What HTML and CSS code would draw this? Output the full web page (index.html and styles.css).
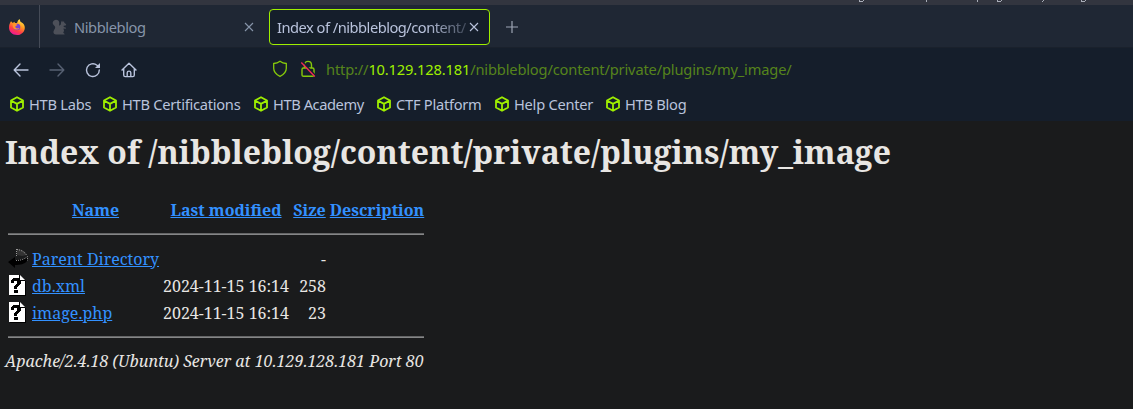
FILE: index.html
```html
<!DOCTYPE html>
<html lang="en">
<head>
<meta charset="utf-8">
<title>Index of /nibbleblog/content/private/plugins/my_image</title>
<link rel="stylesheet" href="styles.css">
</head>
<body>
<svg class="defs" width="0" height="0">
  <symbol id="cube" viewBox="0 0 16 16"><path d="M8 1.2 14 4.5v7L8 14.8 2 11.5v-7zM2.3 4.7 8 7.9l5.7-3.2M8 7.9v6.7" fill="none" stroke="#9fef00" stroke-width="1.8" stroke-linejoin="round"/></symbol>
  <symbol id="close" viewBox="0 0 10 10"><path d="m1 1 8 8M9 1 1 9" fill="none" stroke="currentColor" stroke-width="1.1"/></symbol>
  <symbol id="unknown" viewBox="0 0 18 22"><path d="M2 20h15V6h1v15H2z" fill="#000"/><path d="M1 0h11l5 5v15H1z" fill="#fff"/><path d="M12 0v5h5v1h-6V0z" fill="#000"/><path d="M3 8V5h1V4h1V3h6v1h1v1h1v4h-1v1h-1v1h-1v1H9v2H6v-3h1v-1h1V9h1V6H6v2zM6 15h4v3H6z" fill="#000"/></symbol>
</svg>
<div class="strip"><svg width="240" height="3" viewBox="0 0 240 3"><path d="M0 0h1v1h3V0h1v1H4v1H0zM67 0h1v2h-1zM118 0h1v2h-1zM138 0h1v1h3V0h1v1h-1v1h-4zM184 0h1v1h-1v1h-1V1h1zM222 0h1v1h3V0h1v1h-1v1h-4z" fill="#a9adb8"/></svg></div>
<header>
  <div class="tabs">
    <div class="pinned">
      <svg width="18" height="18" viewBox="0 0 18 18">
        <defs><linearGradient id="fire" x1=".8" y1="0" x2=".3" y2="1"><stop offset="0" stop-color="#fff44f"/><stop offset=".4" stop-color="#ff9a20"/><stop offset=".7" stop-color="#ff3e45"/><stop offset="1" stop-color="#ed169e"/></linearGradient></defs>
        <path d="M3 3.2 4.8 5 6.3 3.8 7 5.1 9 5l1-2.500L11.500 1l1 2.700c3.700 1.700 4.700 4.400 4.200 7.200-.7 3.500-3.800 6.100-7.600 6.100C4.200 17 1 13.800 1 9.500 1 7 1.700 5.300 3 3.200z" fill="url(#fire)"/>
        <circle cx="9" cy="9" r="3.300" fill="#7543d5"/><path d="M4.500 6.400c2-1 3.800-.7 5 .5L7.400 8.200c-.2 1.500.8 2.200 2 2.200l2-.4c-.8 2.200-5.700 2.300-6.400-1z" fill="#ff9430"/>
      </svg>
    </div>
    <div class="tab idle">
      <svg width="16" height="16" viewBox="0 0 16 16"><path d="M4 15.500C1.500 15.500.8 13 2 11.200 3.200 9.400 3.600 8.500 2.600 7 1.400 5.500.4 5 .8 3.200 1.300.8 4.300-.1 6 1.300c2 1.600 1 3.600 1.100 5.500L8.800 5.500 9 3.500l1-2 .9 1.700L12 2l.3 1.700 1.900 1.500-.5 1.300-2 .3v1.100l2.400.9-.4 1-2.300-.3.700 2.300-.9 2 1.300.9v.8z" fill="#4d5059"/></svg>
      <span class="name nib">Nibbleblog</span>
      <svg class="x" width="10" height="10"><use href="#close"/></svg>
    </div>
    <div class="tab active"><span class="name idx">Index of /nibbleblog/content/</span><svg class="x" width="10" height="10"><use href="#close"/></svg></div>
    <svg class="plus" width="14" height="14" viewBox="0 0 14 14"><path d="M7 1v12M1 7h12" stroke="#9da6b5" stroke-width="1.2"/></svg>
  </div>
  <nav class="toolbar">
    <svg width="16" height="16" viewBox="0 0 16 16"><path d="M15 8H1.500M7 2 1.200 8 7 14" class="line"/></svg>
    <svg class="dim" width="16" height="16" viewBox="0 0 16 16"><path d="M1 8h13.500M9 2l5.800 6L9 14" class="line"/></svg>
    <svg width="16" height="16" viewBox="0 0 16 16"><path d="M14.300 8A6.400 6.400 0 1 1 12 3.200l1.500 1.400" class="line"/><path d="M15 1v5h-5z" fill="#b9c3dc"/></svg>
    <svg width="16" height="16" viewBox="0 0 16 16"><path d="M1 8 8 1.200 15 8M2.700 6.700V13c0 1 .5 1.600 1.500 1.600h7.600c1 0 1.500-.6 1.500-1.600V6.700M6.200 14.500v-3.700c0-2.300 3.600-2.300 3.600 0v3.700" class="line"/></svg>
    <div class="url">
      <svg width="16" height="18" viewBox="0 0 16 18"><path d="M8 1.200c2 1.500 4 2.100 6.300 2.300v4.700c0 3.800-2.300 6.200-6.300 8.200-4-2-6.300-4.400-6.300-8.200V3.500C4 3.300 6 2.700 8 1.200z" fill="none" stroke="#86c90a" stroke-width="1.300"/></svg>
      <svg width="16" height="18" viewBox="0 0 16 18"><path d="M4.500 8V5c0-4.800 7-4.800 7 0v3M3.500 8h9q1.500 0 1.500 1.500V15q0 1.300-1.500 1.300h-9Q2 16.300 2 15V9.500Q2 8 3.500 8z" fill="none" stroke="#86c90a" stroke-width="1.400"/><path d="m2.500 1.500 13 14" stroke="#151e2b" stroke-width="1.500"/><path d="m1.300 2.500 13.500 14" stroke="#f02858" stroke-width="1.400"/></svg>
      <span class="address">http://<b>10.129.128.181</b>/nibbleblog/content/private/plugins/my_image/</span>
    </div>
  </nav>
  <nav class="bookmarks">
    <a class="bm1"><svg><use href="#cube"/></svg>HTB Labs</a>
    <a class="bm2"><svg><use href="#cube"/></svg>HTB Certifications</a>
    <a class="bm3"><svg><use href="#cube"/></svg>HTB Academy</a>
    <a class="bm4"><svg><use href="#cube"/></svg>CTF Platform</a>
    <a class="bm5"><svg><use href="#cube"/></svg>Help Center</a>
    <a class="bm6"><svg><use href="#cube"/></svg>HTB Blog</a>
  </nav>
</header>
<main>
  <h1>Index of /nibbleblog/content/private/plugins/my_image</h1>
  <div class="listing">
    <div class="row head"><span></span><a>Name</a><a>Last modified</a><a>Size</a><a>Description</a></div>
    <hr>
    <div class="row"><svg class="back" width="20" height="22" viewBox="0 0 20 22"><path d="M9 1c5 0 9 3 10 6l-5 1-5-1z" fill="#333"/><path d="m0 14 7-5v3c6 0 10-1 12-3v4c-2 3-7 4-12 4v3z" fill="#000"/><path d="M8.500 1v7M9 1.500c4 .5 7 2 9.500 5.500M8 12.500c4 0 8-1 11.500-4v4" fill="none" stroke="#bbb" stroke-width=".8" stroke-dasharray="1 1"/></svg><span><a>Parent Directory</a></span><span></span><span class="size">-</span></div>
    <div class="row"><svg width="18" height="22"><use href="#unknown"/></svg><span><a>db.xml</a></span><span>2024-11-15 16:14</span><span class="size">258</span></div>
    <div class="row"><svg width="18" height="22"><use href="#unknown"/></svg><span><a>image.php</a></span><span>2024-11-15 16:14</span><span class="size">23</span></div>
    <hr class="last">
  </div>
  <address>Apache/2.4.18 (Ubuntu) Server at 10.129.128.181 Port 80</address>
</main>
</body>
</html>
```
FILE: styles.css
```css
* { box-sizing: border-box; }
body { margin: 0; height: 409px; overflow: hidden; background: #1a1b1c; font-family: "Noto Sans", sans-serif; font-size: 14.67px; color: #b9c3dc; white-space: nowrap; }
svg { display: block; flex: none; }
.defs { position: absolute; }
.strip { height: 5px; background: #32353f; padding-left: 859px; overflow: hidden; }
header { height: 116px; background: #151e2b; }
.tabs { height: 43px; background: #1f2734; display: flex; align-items: center; border-bottom: 1px solid #1a212c; }
.pinned { width: 40px; height: 43px; border-right: 1px solid #454b57; padding: 13px 0 0 8px; }
.tab { display: flex; align-items: center; }
.idle { width: 229px; margin-top: 2px; padding-left: 12px; gap: 6px; color: #8795aa; }
.idle .x { margin-left: auto; margin-right: 15px; }
.name { line-height: 22px; letter-spacing: -.4px; }
.active { width: 221px; height: 36px; margin-top: 1px; border: 1px solid #9fef00; border-radius: 4px; background: #151e2b; padding-left: 7px; color: #b9c3dc; }
.active .name { width: 190px; mask-image: linear-gradient(90deg, #000 150px, rgb(0 0 0 / .25) 190px); }
.idx { letter-spacing: -.5px; }
.active .x { margin-left: 2px; }
.plus { margin: 2px 0 0 15px; }
.toolbar { height: 43px; display: flex; align-items: center; gap: 20px; padding-left: 13px; }
.line { fill: none; stroke: #b9c3dc; stroke-width: 1.4; stroke-linecap: round; stroke-linejoin: round; }
.dim { opacity: .4; }
.url { display: flex; align-items: center; gap: 12px; margin: -1px 0 0 115px; }
.address { color: #55841b; margin-left: -2px; padding-bottom: 1px; letter-spacing: -.16px; }
.address b { font-weight: 400; color: #9fef00; }
.bookmarks { height: 26px; display: flex; align-items: center; padding-left: 9px; letter-spacing: -.26px; }
.bookmarks a { display: flex; align-items: center; gap: 4px; flex: none; }
.bookmarks svg { width: 16px; height: 16px; }
.bm1 { width: 93px; } .bm2 { width: 151px; } .bm3 { width: 123px; letter-spacing: -.42px; } .bm4 { width: 118px; } .bm5 { width: 111px; }
main { color: #e8e6e3; font-family: "Noto Serif", "DejaVu Serif Condensed", "DejaVu Serif", serif; font-size: 16px; }
h1 { margin: 9px 0 0 5px; font-size: 32px; line-height: 44px; }
.listing { width: 416px; margin: 25px 0 0 8px; }
.row { display: grid; grid-template-columns: 20px 127px 126px 33px 94px; column-gap: 4px; height: 27px; align-items: center; }
.row a { color: #3391ff; text-decoration: underline; }
.head { height: 22px; font-weight: 700; }
.head a { justify-self: center; }
.size { justify-self: end; }
hr { margin: 12px 0 10px; height: 2px; border: 0; border-top: 1px solid #646566; background: #858687; }
.last { margin: 10px 0 0; }
address { margin: 12px 0 0 5px; line-height: 22px; }
```
